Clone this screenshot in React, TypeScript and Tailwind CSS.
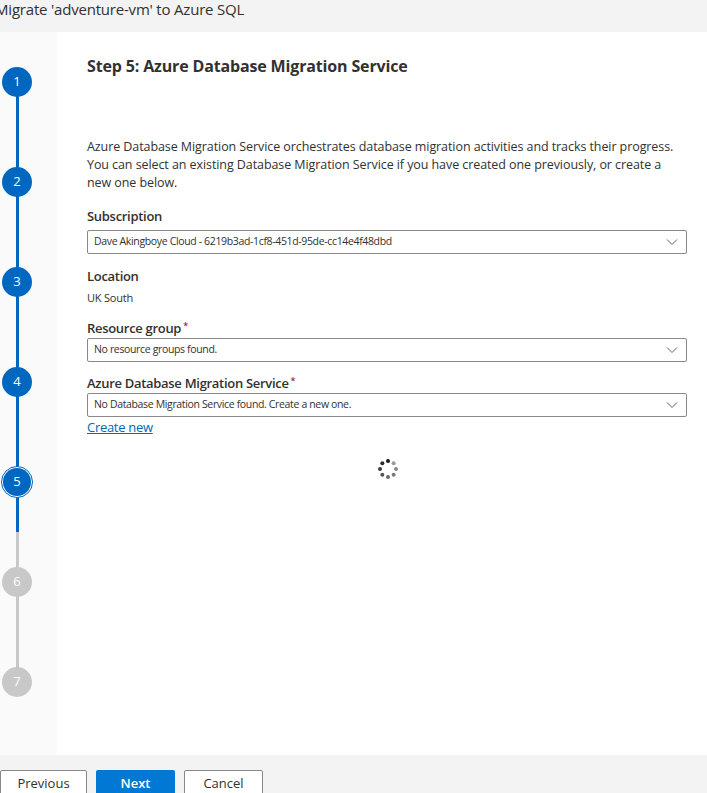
import React from "react";

const font = { fontFamily: '"Open Sans", "Noto Sans", sans-serif' };

function Chevron() {
  return (
    <svg width="12" height="8" viewBox="0 0 12 8" className="shrink-0">
      <path d="M1 1.5 L6 6.5 L11 1.5" fill="none" stroke="#605e5c" strokeWidth="1" />
    </svg>
  );
}

function Dropdown({ text }: { text: string }) {
  return (
    <div className="flex h-[24px] items-center justify-between rounded-[2px] border border-[#8a8886] bg-white pl-[6px] pr-[8px]">
      <span className="text-[10.5px] tracking-[-0.35px] text-[#323130]">{text}</span>
      <Chevron />
    </div>
  );
}

function Step({ n, state }: { n: number; state: "done" | "active" | "todo" }) {
  if (state === "active") {
    return (
      <div className="flex h-[32px] w-[32px] items-center justify-center rounded-full border border-[#0067c0] bg-white">
        <div className="flex h-[28px] w-[28px] items-center justify-center rounded-full bg-[#0067c0] text-[13px] text-white">
          {n}
        </div>
      </div>
    );
  }
  return (
    <div
      className={
        "flex h-[30px] w-[30px] items-center justify-center rounded-full text-[13px] text-white " +
        (state === "done" ? "bg-[#0067c0]" : "bg-[#c8c8c8]")
      }
    >
      {n}
    </div>
  );
}

function Spinner() {
  const dots = Array.from({ length: 8 });
  const shades = ["#1b1b1b", "#9a9a9a", "#8a8a8a", "#7a7a7a", "#6a6a6a", "#555", "#3d3d3d", "#2a2a2a"];
  return (
    <svg width="24" height="24" viewBox="-12 -12 24 24">
      {dots.map((_, i) => {
        const a = (i * Math.PI * 2) / 8 - Math.PI / 2;
        return <circle key={i} cx={Math.cos(a) * 8} cy={Math.sin(a) * 8} r="2" fill={shades[i]} />;
      })}
    </svg>
  );
}

export default function App() {
  return (
    <div className="flex h-[793px] w-[707px] flex-col overflow-hidden bg-[#f3f3f3] text-[#323130]" style={font}>
      <div className="flex h-[32px] shrink-0 items-start">
        <div className="ml-[-5px] mt-[-2px] text-[15px] tracking-[-0.2px] text-[#323130]">Migrate 'adventure-vm' to Azure SQL</div>
      </div>
      <div className="flex flex-1">
        <div className="relative w-[57px] shrink-0 bg-[#fafafa]">
          <div className="absolute left-[16px] top-[50px] h-[450px] w-[3px] bg-[#0067c0]" />
          <div className="absolute left-[16px] top-[500px] h-[150px] w-[3px] bg-[#c8c8c8]" />
          <div className="relative flex flex-col items-start gap-[70px] pl-[2px] pt-[35px]">
            <Step n={1} state="done" />
            <Step n={2} state="done" />
            <Step n={3} state="done" />
            <Step n={4} state="done" />
            <div className="ml-[-1px] my-[-1px]"><Step n={5} state="active" /></div>
            <Step n={6} state="todo" />
            <Step n={7} state="todo" />
          </div>
        </div>
        <div className="flex-1 bg-white pl-[30px] pr-[20px]">
          <h1 className="mt-[22px] text-[16px] font-bold tracking-[-0.15px] text-[#323130]">Step 5: Azure Database Migration Service</h1>
          <p className="mt-[60px] text-[12.5px] leading-[18px] tracking-[-0.08px] text-[#323130]">
            Azure Database Migration Service orchestrates database migration activities and tracks their progress. You can select an existing Database Migration Service if you have created one previously, or create a new one below.
          </p>
          <div className="mt-[15px] text-[13px] font-semibold tracking-[-0.3px]">Subscription</div>
          <div className="mt-[3px]">
            <Dropdown text="Dave Akingboye Cloud - 6219b3ad-1cf8-451d-95de-cc14e4f48dbd" />
          </div>
          <div className="mt-[13px] text-[13px] font-semibold tracking-[-0.3px]">Location</div>
          <div className="mt-[4px] text-[11px] tracking-[-0.2px]">UK South</div>
          <div className="mt-[12px] text-[13px] font-semibold tracking-[-0.3px]">
            Resource group<span className="ml-[2px] align-top text-[9px] text-[#a4262c]">*</span>
          </div>
          <div className="mt-[0px]">
            <Dropdown text="No resource groups found." />
          </div>
          <div className="mt-[12px] text-[13px] font-semibold tracking-[-0.3px]">
            Azure Database Migration Service<span className="ml-[2px] align-top text-[9px] text-[#a4262c]">*</span>
          </div>
          <div className="mt-[-1px]">
            <Dropdown text="No Database Migration Service found. Create a new one." />
          </div>
          <a href="#" className="block text-[13px] leading-[20px] tracking-[-0.3px] text-[#0067b8] underline">Create new</a>
          <div className="mt-[20px] flex justify-center pl-[2px]">
            <Spinner />
          </div>
        </div>
      </div>
      <div className="flex h-[38px] shrink-0 items-start gap-[9px] pt-[15px]">
        <button className="h-[28px] w-[87px] rounded-[2px] border border-[#8a8886] bg-white text-[13px] text-[#323130]">Previous</button>
        <button className="h-[28px] w-[79px] rounded-[2px] bg-[#0078d4] text-[13px] font-semibold text-white">Next</button>
        <button className="h-[28px] w-[79px] rounded-[2px] border border-[#8a8886] bg-white text-[13px] text-[#323130]">Cancel</button>
      </div>
    </div>
  );
}
